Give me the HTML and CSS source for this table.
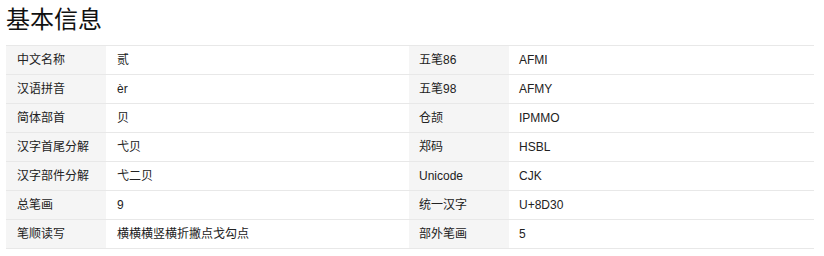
FILE: index.html
```html
<!DOCTYPE html>
<html lang="zh">
<head>
<meta charset="utf-8">
<title>基本信息</title>
<link rel="stylesheet" href="styles.css">
</head>
<body>
<div class="wrap">
  <h2 class="title">基本信息</h2>
  <table class="info">
    <colgroup>
      <col class="c-label"><col class="c-val-l"><col class="c-label"><col class="c-val-r">
    </colgroup>
    <tbody>
      <tr><th>中文名称</th><td>贰</td><th>五笔86</th><td>AFMI</td></tr>
      <tr><th>汉语拼音</th><td>èr</td><th>五笔98</th><td>AFMY</td></tr>
      <tr><th>简体部首</th><td>贝</td><th>仓颉</th><td>IPMMO</td></tr>
      <tr><th>汉字首尾分解</th><td>弋贝</td><th>郑码</th><td>HSBL</td></tr>
      <tr><th>汉字部件分解</th><td>弋二贝</td><th>Unicode</th><td>CJK</td></tr>
      <tr><th>总笔画</th><td>9</td><th>统一汉字</th><td>U+8D30</td></tr>
      <tr><th>笔顺读写</th><td>横横横竖横折撇点戈勾点</td><th>部外笔画</th><td>5</td></tr>
    </tbody>
  </table>
</div>
</body>
</html>
```

FILE: styles.css
```css
html, body {
  margin: 0;
  padding: 0;
  background: #ffffff;
}
.wrap {
  padding: 4px 10px 0 6px;
  font-family: "Liberation Sans", "Noto Sans CJK SC", sans-serif;
  color: #222;
}
.title {
  margin: 0 0 9px 0;
  font-size: 24px;
  font-weight: normal;
  line-height: 32px;
  color: #111;
}
.info {
  width: 808px;
  border-collapse: collapse;
  table-layout: fixed;
  border-top: 1px solid #e8e8e8;
  font-size: 12px;
}
.c-label { width: 100px; }
.c-val-l { width: 303px; }
.c-val-r { width: 305px; }
.info th,
.info td {
  height: 28px;
  padding: 0 10px 0 11px;
  border-bottom: 1px solid #e8e8e8;
  text-align: left;
  font-weight: normal;
  vertical-align: middle;
  line-height: 16px;
  white-space: nowrap;
}
.info th {
  background: #f5f5f5;
}
.info td {
  background: #ffffff;
}
.info th:nth-child(3),
.info td:nth-child(4) {
  padding-left: 10px;
}
```
